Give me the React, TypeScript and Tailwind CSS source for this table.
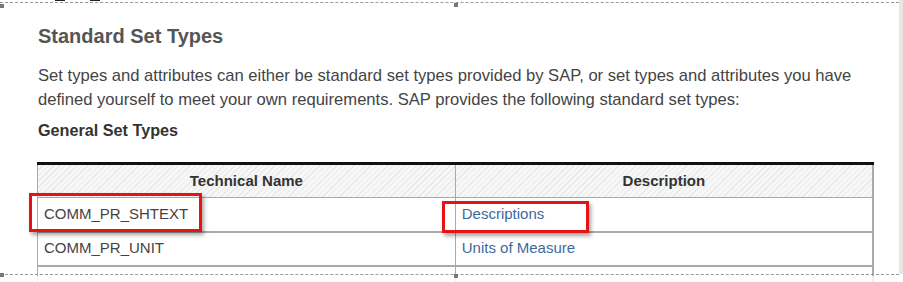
import React from "react";

const font = { fontFamily: '"Liberation Sans", Arial, sans-serif' };

function Handle({ className }: { className: string }) {
  return <div className={`absolute w-[4px] h-[4px] bg-[#777] ${className}`} />;
}

export default function App() {
  return (
    <div
      className="relative w-[903px] h-[282px] overflow-hidden bg-white"
      style={font}
    >
      {/* page content */}
      <div className="pl-[38px] pr-[28px] pt-[24px] w-[903px]">
        <h2 className="text-[20px] leading-[24px] font-bold text-[#555]">
          Standard Set Types
        </h2>
        <p className="mt-[16px] text-[16.6px] leading-[24px] text-[#444] w-[830px]">
          Set types and attributes can either be standard set types provided by
          SAP, or set types and attributes you have defined yourself to meet
          your own requirements. SAP provides the following standard set types:
        </p>
        <h3 className="mt-[6px] text-[16.2px] leading-[24px] font-bold text-[#333]">
          General Set Types
        </h3>

        <table className="mt-[20px] w-[837px] -ml-[1px] border-collapse border-t-[3px] border-t-[#111] table-fixed">
          <thead>
            <tr className="h-[34px] bg-[repeating-linear-gradient(135deg,#e9e9e9_0px,#e9e9e9_1px,#f7f7f7_1px,#f7f7f7_4px)]">
              <th className="w-1/2 border-l border-r border-b border-[#aaa] text-[15px] font-bold text-[#333] text-center">
                Technical Name
              </th>
              <th className="w-1/2 border-l border-r-2 border-b border-[#aaa] text-[15px] font-bold text-[#333] text-center">
                Description
              </th>
            </tr>
          </thead>
          <tbody className="text-[15px] text-[#444]">
            <tr className="h-[34px]">
              <td className="border-l border-r border-b-2 border-[#aaa] pl-[6px]">
                COMM_PR_SHTEXT
              </td>
              <td className="border-l border-r-2 border-b-2 border-[#aaa] pl-[6px] text-[#3d6a9e]">
                Descriptions
              </td>
            </tr>
            <tr className="h-[34px]">
              <td className="border-l border-r border-b-2 border-[#aaa] pl-[6px]">
                COMM_PR_UNIT
              </td>
              <td className="border-l border-r-2 border-b-2 border-[#aaa] pl-[6px] text-[#3d6a9e]">
                Units of Measure
              </td>
            </tr>
            <tr className="h-[34px]">
              <td className="border-l border-r border-[#aaa]" />
              <td className="border-l border-r-2 border-[#aaa]" />
            </tr>
          </tbody>
        </table>
      </div>

      {/* selection frame */}
      <div className="absolute left-0 right-[4px] top-[2px] h-[273px] border-t border-b border-dashed border-[#999] pointer-events-none" />
      <div className="absolute left-0 right-0 top-[276px] bottom-0 bg-white/80" />
      <Handle className="left-0 top-[4px]" />
      <Handle className="left-[454px] top-[3px]" />
      <Handle className="left-0 top-[273px]" />
      <Handle className="left-[454px] top-[274px]" />
      <div className="absolute left-[55px] top-0 w-[10px] h-[1px] bg-[#222]" />
      <div className="absolute left-[90px] top-0 w-[10px] h-[1px] bg-[#222]" />

      {/* scrollbar edge */}
      <div className="absolute right-0 top-0 w-[4px] h-[274px] bg-[#e6e6e6]" />

      {/* red highlight boxes */}
      <div className="absolute left-[29px] top-[193px] w-[173px] h-[39px] border-[3px] border-[#e41414] shadow-[2px_3px_4px_rgba(0,0,0,0.35)]" />
      <div className="absolute left-[442px] top-[201px] w-[147px] h-[32px] border-[3px] border-[#e41414] shadow-[2px_3px_4px_rgba(0,0,0,0.35)]" />
    </div>
  );
}
